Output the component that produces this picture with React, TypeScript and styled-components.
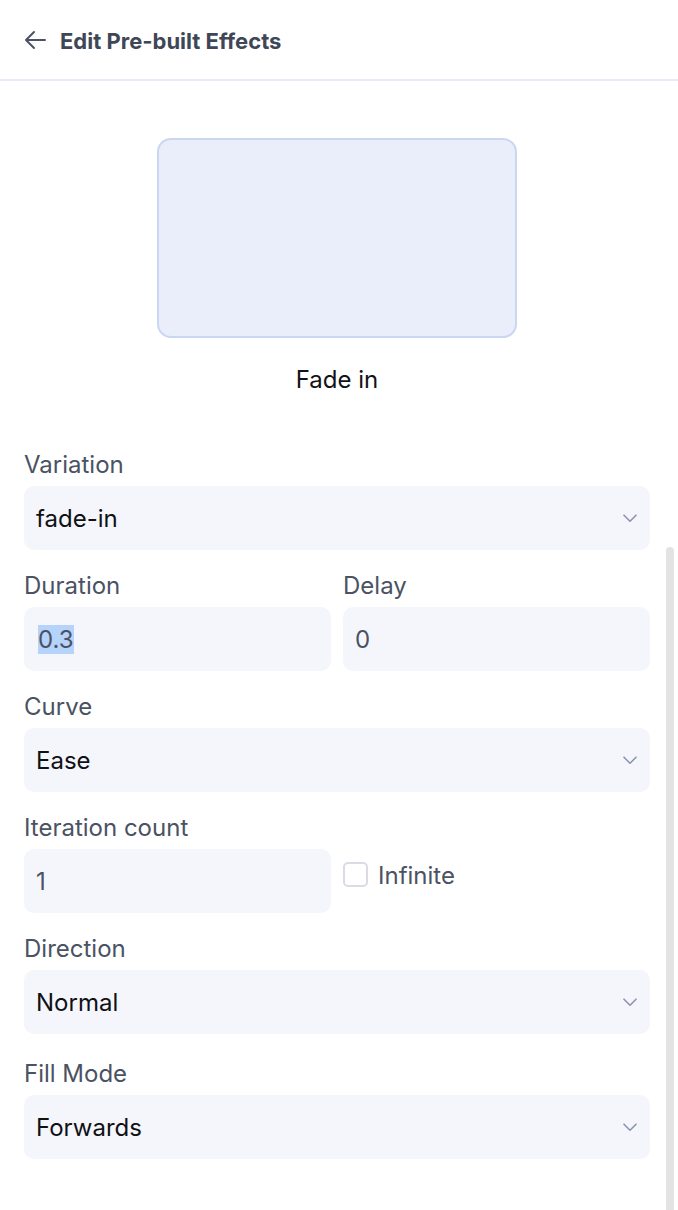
import React from "react";
import styled, { createGlobalStyle } from "styled-components";

const Global = createGlobalStyle`
  html, body { margin: 0; padding: 0; background: #ffffff; }
  body { font-family: Inter, "Noto Sans", "Liberation Sans", sans-serif; -webkit-font-smoothing: antialiased; }
  * { box-sizing: border-box; }
`;

const Page = styled.div`
  position: relative;
  width: 678px;
  min-height: 1210px;
  background: #ffffff;
  overflow: hidden;
`;

const Header = styled.header`
  height: 81px;
  display: flex;
  align-items: center;
  gap: 14px;
  padding: 3px 24px 0 24px;
  border-bottom: 2px solid #e7ebf7;
`;

const BackButton = styled.button`
  display: flex;
  align-items: center;
  justify-content: center;
  width: 22px;
  height: 22px;
  padding: 0;
  margin-top: -2px;
  border: none;
  background: none;
  color: #4a5263;
`;

const Title = styled.h1`
  margin: 0;
  font-size: 22px;
  line-height: 27px;
  font-weight: 700;
  color: #3f4757;
`;

const Content = styled.main`
  padding: 57px 28px 40px 24px;
  display: flex;
  flex-direction: column;
`;

const PreviewWrap = styled.section`
  display: flex;
  flex-direction: column;
  align-items: center;
  gap: 28px;
  margin-bottom: 58px;
`;

const PreviewBox = styled.div`
  width: 360px;
  height: 200px;
  border: 2px solid #cad7f3;
  border-radius: 14px;
  background: #eaeefa;
`;

const PreviewName = styled.div`
  font-size: 24px;
  line-height: 27px;
  color: #111318;
`;

const Form = styled.div`
  display: flex;
  flex-direction: column;
  gap: 22px;
`;

const Row = styled.div`
  display: grid;
  grid-template-columns: 1fr 1fr;
  column-gap: 12px;
`;

const Field = styled.div<{ $spaced?: boolean }>`
  display: flex;
  flex-direction: column;
  margin-top: ${(p) => (p.$spaced ? "4px" : "0")};
`;

const Label = styled.label`
  font-size: 24px;
  line-height: 27px;
  color: #4a5263;
  margin-bottom: 8px;
`;

const Box = styled.div<{ $muted?: boolean }>`
  height: 64px;
  display: flex;
  align-items: center;
  justify-content: space-between;
  padding: 0 13px 0 12px;
  border-radius: 10px;
  background: #f5f6fb;
  font-size: 24px;
  color: ${(p) => (p.$muted ? "#4a5263" : "#0f1115")};
`;

const Selected = styled.span`
  background: #b5d3fb;
  margin-left: 2px;
`;

const CheckRow = styled.label`
  display: flex;
  align-items: center;
  align-self: start;
  gap: 10px;
  padding-top: 48px;
  font-size: 24px;
  line-height: 27px;
  color: #4a5263;
`;

const CheckBox = styled.span`
  width: 25px;
  height: 25px;
  border: 2px solid #d9dce4;
  border-radius: 5px;
  background: #ffffff;
  margin-top: -2px;
`;

const ScrollThumb = styled.div`
  position: absolute;
  right: 4px;
  top: 547px;
  bottom: 0;
  width: 8px;
  border-radius: 4px 4px 0 0;
  background: #e3e3e3;
`;

const Chevron = () => (
  <svg width="14" height="9" viewBox="0 0 14 9" fill="none">
    <path d="M1 1.2L7 7.2L13 1.2" stroke="#8d93b2" strokeWidth="1.6" strokeLinecap="round" strokeLinejoin="round" />
  </svg>
);

const BackArrow = () => (
  <svg width="22" height="22" viewBox="0 0 22 22" fill="none">
    <path d="M21 11H2M10 3L2 11L10 19" stroke="#4a5263" strokeWidth="2" strokeLinecap="round" strokeLinejoin="round" />
  </svg>
);

const SelectField = ({ label, value, spaced }: { label: string; value: string; spaced?: boolean }) => (
  <Field $spaced={spaced}>
    <Label>{label}</Label>
    <Box>
      <span>{value}</span>
      <Chevron />
    </Box>
  </Field>
);

export default function App() {
  return (
    <Page>
      <Global />
      <Header>
        <BackButton aria-label="Back">
          <BackArrow />
        </BackButton>
        <Title>Edit Pre-built Effects</Title>
      </Header>
      <Content>
        <PreviewWrap>
          <PreviewBox />
          <PreviewName>Fade in</PreviewName>
        </PreviewWrap>
        <Form>
          <SelectField label="Variation" value="fade-in" />
          <Row>
            <Field>
              <Label>Duration</Label>
              <Box $muted>
                <Selected>0.3</Selected>
              </Box>
            </Field>
            <Field>
              <Label>Delay</Label>
              <Box $muted>
                <span>0</span>
              </Box>
            </Field>
          </Row>
          <SelectField label="Curve" value="Ease" />
          <Row>
            <Field>
              <Label>Iteration count</Label>
              <Box $muted>
                <span>1</span>
              </Box>
            </Field>
            <CheckRow>
              <CheckBox />
              Infinite
            </CheckRow>
          </Row>
          <SelectField label="Direction" value="Normal" />
          <SelectField label="Fill Mode" value="Forwards" spaced />
        </Form>
      </Content>
      <ScrollThumb />
    </Page>
  );
}
